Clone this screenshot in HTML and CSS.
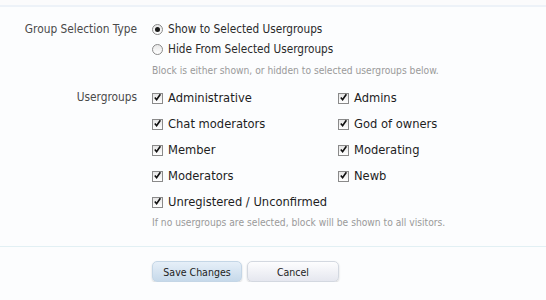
FILE: index.html
```html
<!DOCTYPE html>
<html lang="en">
<head>
    <meta charset="UTF-8">
    <title>Block Options</title>
    <link rel="stylesheet" href="styles.css">
</head>
<body>
    <div class="top-strip"></div>

    <form class="block-form">
        <!-- Selection type -->
        <dl class="ctrl-unit">
            <dt class="ctrl-label">Group Selection Type</dt>
            <dd>
                <ul class="radio-list">
                    <li><span class="radio checked"></span>Show to Selected Usergroups</li>
                    <li><span class="radio"></span>Hide From Selected Usergroups</li>
                </ul>
                <p class="hint">Block is either shown, or hidden to selected usergroups below.</p>
            </dd>
        </dl>

        <!-- Usergroups -->
        <dl class="ctrl-unit groups-unit">
            <dt class="ctrl-label">Usergroups</dt>
            <dd>
                <ul class="check-grid">
                    <li><span class="check"><svg viewBox="0 0 11 11"><path d="M2.2 5.6 L4.4 8.2 L9 1.6" /></svg></span>Administrative</li>
                    <li><span class="check"><svg viewBox="0 0 11 11"><path d="M2.2 5.6 L4.4 8.2 L9 1.6" /></svg></span>Admins</li>
                    <li><span class="check"><svg viewBox="0 0 11 11"><path d="M2.2 5.6 L4.4 8.2 L9 1.6" /></svg></span>Chat moderators</li>
                    <li><span class="check"><svg viewBox="0 0 11 11"><path d="M2.2 5.6 L4.4 8.2 L9 1.6" /></svg></span>God of owners</li>
                    <li><span class="check"><svg viewBox="0 0 11 11"><path d="M2.2 5.6 L4.4 8.2 L9 1.6" /></svg></span>Member</li>
                    <li><span class="check"><svg viewBox="0 0 11 11"><path d="M2.2 5.6 L4.4 8.2 L9 1.6" /></svg></span>Moderating</li>
                    <li><span class="check"><svg viewBox="0 0 11 11"><path d="M2.2 5.6 L4.4 8.2 L9 1.6" /></svg></span>Moderators</li>
                    <li><span class="check"><svg viewBox="0 0 11 11"><path d="M2.2 5.6 L4.4 8.2 L9 1.6" /></svg></span>Newb</li>
                    <li><span class="check"><svg viewBox="0 0 11 11"><path d="M2.2 5.6 L4.4 8.2 L9 1.6" /></svg></span>Unregistered / Unconfirmed</li>
                </ul>
                <p class="hint">If no usergroups are selected, block will be shown to all visitors.</p>
            </dd>
        </dl>

        <div class="submit-unit">
            <button type="button" class="button primary">Save Changes</button>
            <button type="button" class="button">Cancel</button>
        </div>
    </form>
</body>
</html>
```

FILE: styles.css
```css
body {
    margin: 0;
    padding: 0;
    background-color: #fcfdfe;
    font-family: "DejaVu Sans Condensed", "DejaVu Sans", sans-serif;
    font-stretch: condensed;
    color: #222;
}
.top-strip {
    height: 5px;
    background-color: #fbfbfc;
    border-bottom: 2px solid #edf2f8;
}
.block-form {
    padding-top: 12px;
}
.ctrl-unit {
    display: grid;
    grid-template-columns: 137px 1fr;
    column-gap: 15px;
    margin: 0;
}
.ctrl-unit dd {
    margin: 0;
}
.ctrl-label {
    text-align: right;
    font-size: 11.8px;
    line-height: 20px;
    color: #4a4a4a;
}
.radio-list, .check-grid {
    list-style: none;
    margin: 0;
    padding: 0;
}
.radio-list li {
    display: flex;
    align-items: center;
    font-size: 11.7px;
    line-height: 20px;
    color: #2a2a2a;
}
.radio {
    width: 9px;
    height: 9px;
    border: 1px solid #8a8a8a;
    border-radius: 50%;
    background: linear-gradient(#e8e8e8, #ffffff);
    margin-right: 5px;
    position: relative;
}
.radio.checked::after {
    content: "";
    position: absolute;
    left: 2px;
    top: 2px;
    width: 5px;
    height: 5px;
    border-radius: 50%;
    background-color: #1a1a1a;
}
.hint {
    margin: 4px 0 0;
    font-size: 10.2px;
    line-height: 16px;
    color: #9a9a9a;
}
.groups-unit {
    margin-top: 5px;
}
.groups-unit .ctrl-label {
    line-height: 26px;
}
.check-grid {
    display: grid;
    grid-template-columns: 186px 186px;
    grid-auto-rows: 26px;
}
.check-grid li {
    display: flex;
    align-items: center;
    font-size: 12.8px;
    color: #1e1e1e;
    white-space: nowrap;
}
.check {
    width: 9px;
    height: 9px;
    border: 1px solid #8a8a8a;
    background: linear-gradient(#e6e6e6, #ffffff);
    margin-right: 5px;
    position: relative;
    top: 1px;
}
.check svg {
    position: absolute;
    left: 0;
    top: -1px;
    width: 9px;
    height: 9px;
}
.check path {
    fill: none;
    stroke: #111;
    stroke-width: 2;
}
.groups-unit .hint {
    margin-top: 1px;
}
.submit-unit {
    margin-top: 15px;
    border-top: 1px solid #e2f0f4;
    padding: 14px 0 0 152px;
    display: flex;
    gap: 5px;
}
.button {
    height: 21px;
    width: 92px;
    border: 1px solid #d3d8e0;
    border-radius: 5px;
    background: linear-gradient(#fdfdfe, #e5e7ef);
    box-shadow: 0 1px 2px rgba(0, 0, 0, 0.18);
    font-family: "DejaVu Sans Condensed", "DejaVu Sans", sans-serif;
    font-stretch: condensed;
    font-size: 10.5px;
    color: #222;
    padding: 0;
}
.button.primary {
    width: 90px;
    border-color: #c4d6e6;
    background: linear-gradient(#e6eff8, #c6d9ea);
}
```
